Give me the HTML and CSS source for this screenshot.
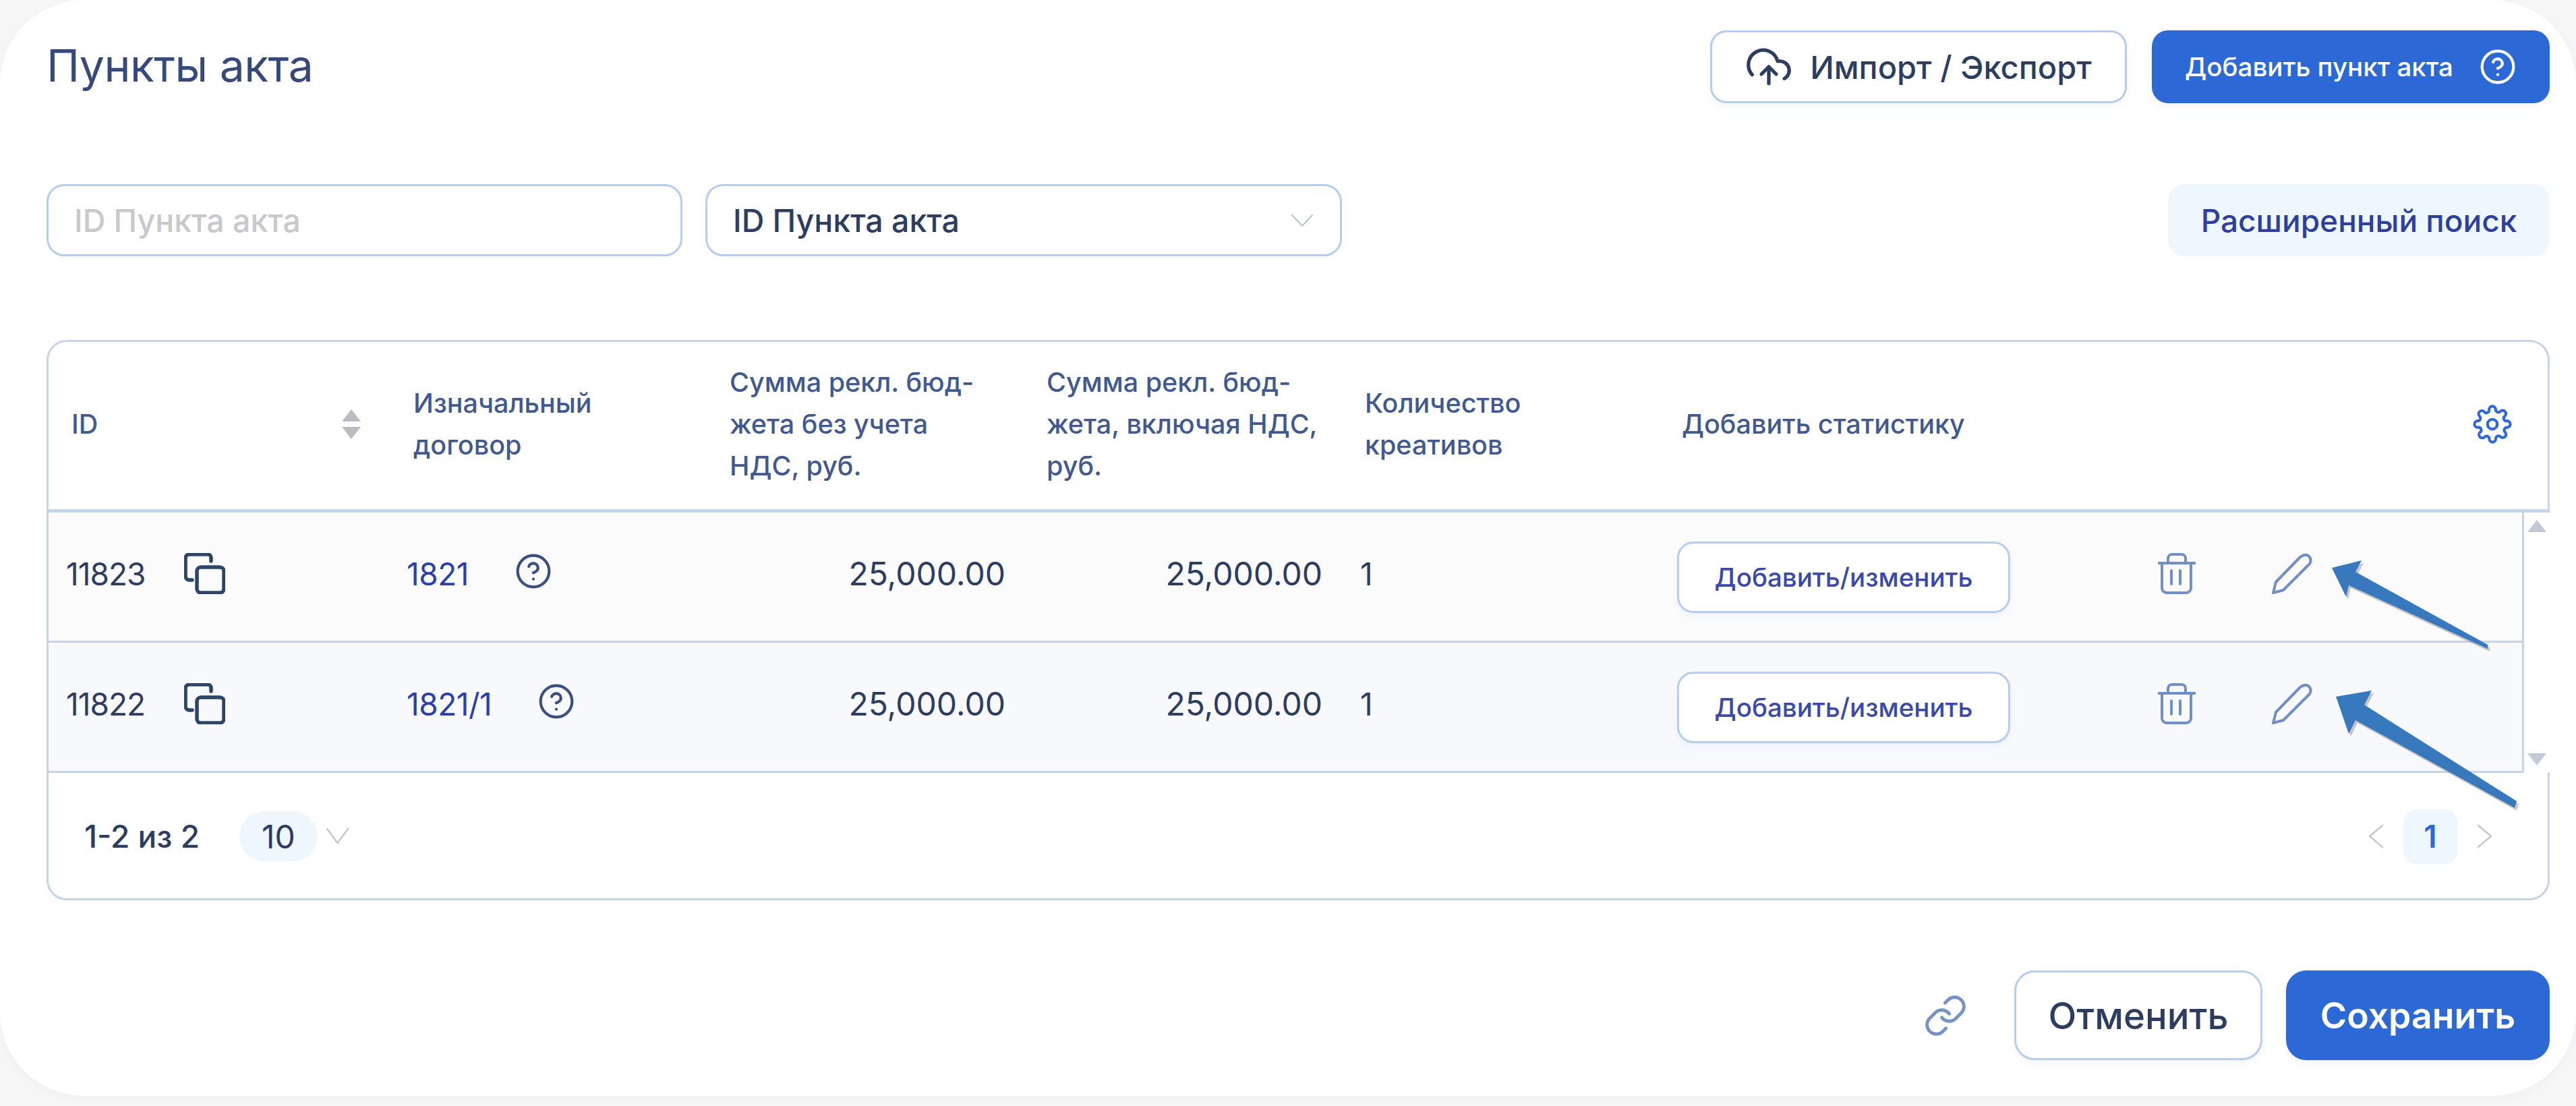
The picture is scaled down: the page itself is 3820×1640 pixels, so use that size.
FILE: index.html
```html
<!DOCTYPE html>
<html lang="ru">
<head>
<meta charset="utf-8">
<title>Пункты акта</title>
<link rel="stylesheet" href="styles.css">
</head>
<body>
<main class="panel">
  <header class="top">
    <h1 class="title">Пункты акта</h1>
    <div class="top-actions">
      <button class="btn btn-import">
        <svg class="ic-cloud" viewBox="0 0 24 24"><path d="M16 16l-4-4-4 4"/><path d="M12 12v9"/><path d="M20.39 18.39A5 5 0 0 0 18 9h-1.26A8 8 0 1 0 3 16.3"/></svg>
        <span>Импорт / Экспорт</span>
      </button>
      <button class="btn btn-add">
        <span>Добавить пункт акта</span>
        <svg class="ic-help ic-help-white" viewBox="0 0 24 24"><circle cx="12" cy="12" r="10"/><path d="M9.09 9a3 3 0 0 1 5.83 1c0 2-3 3-3 3"/><path d="M12 17h.01"/></svg>
      </button>
    </div>
  </header>

  <section class="filters">
    <div class="field placeholder">ID Пункта акта</div>
    <div class="field select">
      <span>ID Пункта акта</span>
      <svg class="chev chev-select" viewBox="0 0 32 18"><path d="M1 1l15 16L31 1"/></svg>
    </div>
    <button class="btn btn-adv">Расширенный поиск</button>
  </section>

  <section class="card">
    <div class="grid head">
      <div class="cell-id"><span>ID</span><span class="sort"><i class="tri tri-up"></i><i class="tri tri-down"></i></span></div>
      <div>Изначальный<br>договор</div>
      <div>Сумма рекл. бюд-<br>жета без учета<br>НДС, руб.</div>
      <div>Сумма рекл. бюд-<br>жета, включая НДС,<br>руб.</div>
      <div>Количество<br>креативов</div>
      <div class="cell-stat">
        <span>Добавить статистику</span>
        <svg class="ic-gear" viewBox="0 0 24 24"><circle cx="12" cy="12" r="3"/><path d="M19.4 15a1.65 1.65 0 0 0 .33 1.82l.06.06a2 2 0 1 1-2.83 2.83l-.06-.06a1.65 1.65 0 0 0-2.82 1.17V21a2 2 0 1 1-4 0v-.09a1.65 1.65 0 0 0-2.82-1.11l-.06.06a2 2 0 1 1-2.83-2.83l.06-.06A1.65 1.65 0 0 0 3.09 14H3a2 2 0 1 1 0-4h.09a1.65 1.65 0 0 0 1.11-2.82l-.06-.06a2 2 0 1 1 2.83-2.83l.06.06A1.65 1.65 0 0 0 10 3.09V3a2 2 0 1 1 4 0v.09a1.65 1.65 0 0 0 2.82 1.11l.06-.06a2 2 0 1 1 2.83 2.83l-.06.06A1.65 1.65 0 0 0 20.91 10H21a2 2 0 1 1 0 4h-.09a1.65 1.65 0 0 0-1.51 1z"/></svg>
      </div>
    </div>

    <div class="scroll">
      <div class="rows">
        <div class="grid row row-a">
          <div class="cell-num"><span class="num">11823</span>
            <svg class="ic-copy" viewBox="0 0 61 61"><path d="M40 12V7a5 5 0 0 0-5-5H8a6 6 0 0 0-6 6v26a6 6 0 0 0 6 6h4"/><rect x="19" y="21" width="40" height="38" rx="6"/></svg>
          </div>
          <div class="cell-link"><span class="link">1821</span>
            <svg class="ic-help" viewBox="0 0 24 24"><circle cx="12" cy="12" r="10"/><path d="M9.09 9a3 3 0 0 1 5.83 1c0 2-3 3-3 3"/><path d="M12 17h.01"/></svg>
          </div>
          <div class="cell-sum">25,000.00</div>
          <div class="cell-sum cell-sum2">25,000.00</div>
          <div class="cell-count">1</div>
          <div class="cell-actions">
            <button class="btn btn-edit">Добавить/изменить</button>
            <svg class="ic-trash" viewBox="0 0 56 61"><path d="M1 15h54"/><path d="M15 15V8a6 6 0 0 1 6-6h14a6 6 0 0 1 6 6v7"/><path d="M6 15v37a7 7 0 0 0 7 7h29a7 7 0 0 0 7-7V15"/><path d="M20 26v20M33 26v20"/></svg>
            <svg class="ic-pencil" viewBox="0 0 60 61"><path d="M2 59l4-16L42 6q6-5 12-2 6 5 2 12L17 55z"/></svg>
          </div>
        </div>
        <div class="grid row row-b">
          <div class="cell-num"><span class="num">11822</span>
            <svg class="ic-copy" viewBox="0 0 61 61"><path d="M40 12V7a5 5 0 0 0-5-5H8a6 6 0 0 0-6 6v26a6 6 0 0 0 6 6h4"/><rect x="19" y="21" width="40" height="38" rx="6"/></svg>
          </div>
          <div class="cell-link"><span class="link">1821/1</span>
            <svg class="ic-help" viewBox="0 0 24 24"><circle cx="12" cy="12" r="10"/><path d="M9.09 9a3 3 0 0 1 5.83 1c0 2-3 3-3 3"/><path d="M12 17h.01"/></svg>
          </div>
          <div class="cell-sum">25,000.00</div>
          <div class="cell-sum cell-sum2">25,000.00</div>
          <div class="cell-count">1</div>
          <div class="cell-actions">
            <button class="btn btn-edit">Добавить/изменить</button>
            <svg class="ic-trash" viewBox="0 0 56 61"><path d="M1 15h54"/><path d="M15 15V8a6 6 0 0 1 6-6h14a6 6 0 0 1 6 6v7"/><path d="M6 15v37a7 7 0 0 0 7 7h29a7 7 0 0 0 7-7V15"/><path d="M20 26v20M33 26v20"/></svg>
            <svg class="ic-pencil" viewBox="0 0 60 61"><path d="M2 59l4-16L42 6q6-5 12-2 6 5 2 12L17 55z"/></svg>
          </div>
        </div>
      </div>
      <div class="scrollbar"><i class="tri tri-up tri-bar"></i><i class="tri tri-down tri-bar"></i></div>
    </div>

    <footer class="pager">
      <div class="pager-left">
        <span class="range">1-2 из 2</span>
        <span class="size">10</span>
        <svg class="chev chev-size" viewBox="0 0 33 24"><path d="M1 1l15.500 21L32 1"/></svg>
      </div>
      <div class="pager-right">
        <svg class="chev chev-side" viewBox="0 0 22 34"><path d="M21 1L2 17l19 16"/></svg>
        <span class="page">1</span>
        <svg class="chev chev-side" viewBox="0 0 22 34"><path d="M1 1l19 16L1 33"/></svg>
      </div>
    </footer>
  </section>

  <footer class="bottom">
    <svg class="ic-link" viewBox="0 0 24 24"><path d="M10 13a5 5 0 0 0 7.54.54l3-3a5 5 0 0 0-7.07-7.07l-1.72 1.71"/><path d="M14 11a5 5 0 0 0-7.54-.54l-3 3a5 5 0 0 0 7.07 7.07l1.71-1.71"/></svg>
    <button class="btn btn-cancel">Отменить</button>
    <button class="btn btn-save">Сохранить</button>
  </footer>

  <svg class="arrows" viewBox="0 0 3820 1640">
    <path class="arrow-shadow" d="M3458 842L3502 831 3493 848 3689 956 3689 962 3483 868 3479 885z"/>
    <path class="arrow-shadow" d="M3464 1033L3517 1024 3506 1045 3732 1188 3729 1198 3493 1068 3483 1088z"/>
    <path class="arrow" d="M3458 842L3502 831 3493 848 3689 956 3689 962 3483 868 3479 885z"/>
    <path class="arrow" d="M3464 1033L3517 1024 3506 1045 3732 1188 3729 1198 3493 1068 3483 1088z"/>
  </svg>
</main>
</body>
</html>
```

FILE: styles.css
```css
* { box-sizing: border-box; }
html, body { margin: 0; width: 3820px; height: 1640px; overflow: hidden; }
body { background: #f6f6f6; font-family: Inter, "Noto Sans", sans-serif; color: #2d3d5f; }
svg { display: block; fill: none; stroke-linecap: round; stroke-linejoin: round; }
i { display: block; }
button { font-family: inherit; }

.panel {
  position: relative;
  height: 1625px;
  padding: 45px 39px 0 69px;
  background: #fff;
  border-radius: 124px;
  box-shadow: 0 4px 16px rgba(0, 0, 0, .03);
}

.top { display: flex; justify-content: space-between; align-items: center; height: 108px; }
.title { margin: -4px 0 0; font-size: 66px; font-weight: 400; color: #36497a; letter-spacing: -.5px; }
.top-actions { display: flex; gap: 37px; }

.btn { display: flex; align-items: center; justify-content: center; border-radius: 24px; background: #fff; color: #2d3d5f; border: 3px solid #b5cdee; padding: 0; box-shadow: 0 6px 8px rgba(120, 150, 200, .08); }
.btn-import { width: 618px; height: 108px; gap: 26px; font-size: 47px; font-weight: 500; }
.ic-cloud { width: 70px; height: 66px; stroke: #2d3d5f; stroke-width: 1.900; }
.btn-add { width: 590px; height: 108px; gap: 38px; border: 0; background: #2d69d6; color: #fff; font-size: 38.500px; font-weight: 500; }
.ic-help { width: 56px; height: 56px; stroke: #3a5082; stroke-width: 1.800; }
.ic-help-white { stroke: #fff; }

.filters { display: flex; gap: 34px; margin-top: 120px; height: 107px; }
.field { display: flex; align-items: center; width: 943px; border: 3px solid #b5cdee; border-radius: 26px; padding: 0 38px; font-size: 46.500px; font-weight: 500; }
.placeholder { color: #c8c9cc; }
.select { width: 944px; justify-content: space-between; padding-right: 40px; }
.chev { stroke: #c4c7cc; stroke-width: 2.500; }
.chev-select { width: 32px; height: 18px; }
.btn-adv { width: 566px; margin-left: auto; border: 0; background: #eef6fe; color: #2f3f9e; font-size: 46px; font-weight: 500; box-shadow: none; }

.card { height: 831px; margin-top: 124px; border: 3px solid #c6d3e9; border-radius: 30px; }
.grid { display: grid; grid-template-columns: 525px 469px 470px 472px 470px 1fr; }
.head { height: 253px; align-items: center; padding-bottom: 4px; font-size: 39.500px; font-weight: 500; line-height: 62px; color: #41598f; border-bottom: 5px solid #c6d3e9; }
.head > div { padding-left: 16px; }
.head > .cell-id { display: flex; justify-content: space-between; align-items: center; padding: 0 62px 0 34px; }
.sort { display: flex; flex-direction: column; gap: 8px; }
.tri { width: 0; height: 0; border-left: 14px solid transparent; border-right: 14px solid transparent; }
.tri-up { border-bottom: 18px solid #b9bcc2; }
.tri-down { border-top: 18px solid #b9bcc2; }
.head > .cell-stat { display: flex; justify-content: space-between; align-items: center; padding-right: 53px; }
.ic-gear { width: 58px; height: 58px; stroke: #2d69d6; stroke-width: 1.700; }

.scroll { display: flex; margin-right: -3px; background: #fff; }
.rows { flex: 1; border-right: 3px solid #c6d3e9; }
.row { height: 193px; align-items: center; padding-bottom: 9px; border-bottom: 3px solid #c6d3e9; font-size: 46px; }
.row-a { background: #fbfbfc; }
.row-b { background: #f8f9fd; }
.scrollbar { display: flex; flex-direction: column; justify-content: space-between; align-items: center; width: 38px; padding: 11px 0 11px; }
.tri-bar { border-left-width: 14px; border-right-width: 14px; }
.tri-bar.tri-up { border-bottom: 18px solid #c2cad8; }
.tri-bar.tri-down { border-top: 18px solid #c2cad8; }

.cell-num { display: flex; align-items: center; gap: 58px; padding-left: 26px; }
.num { letter-spacing: -1px; }
.ic-copy { width: 61px; height: 61px; stroke: #2e4468; stroke-width: 5.500; }
.cell-link { display: flex; align-items: center; gap: 68px; padding-left: 6px; }
.cell-link .ic-help { margin-top: -8px; }
.link { color: #2b3fa8; letter-spacing: -.5px; }
.cell-sum { text-align: right; padding-right: 45px; font-size: 48px; }
.cell-sum2 { padding-right: 47px; }
.cell-count { padding-left: 9px; }
.cell-actions { display: flex; align-items: center; padding-left: 9px; }
.btn-edit { width: 494px; height: 106px; margin-top: 10px; font-size: 38.500px; font-weight: 500; color: #3b49a8; }
.ic-trash { width: 56px; height: 61px; margin-left: 219px; stroke: #6f8fc6; stroke-width: 4; }
.ic-pencil { width: 60px; height: 61px; margin-left: 113px; stroke: #6f8fc6; stroke-width: 4; }

.pager { display: flex; justify-content: space-between; align-items: center; height: 188px; padding: 0 82px 0 53px; font-size: 46px; font-weight: 500; }
.pager-left, .pager-right { display: flex; align-items: center; }
.size { display: flex; align-items: center; justify-content: center; width: 116px; height: 74px; margin: 0 13px 0 59px; border-radius: 37px; background: #eef6fe; font-size: 48px; font-weight: 400; }
.chev-size { width: 33px; height: 24px; }
.chev-side { width: 22px; height: 34px; }
.page { display: flex; align-items: center; justify-content: center; width: 80px; height: 81px; margin: 0 30px; border-radius: 20px; background: #eef6fe; color: #2d69d6; font-weight: 600; }

.bottom { display: flex; justify-content: flex-end; align-items: center; gap: 35px; height: 133px; margin-top: 104px; }
.ic-link { width: 66px; height: 66px; margin-right: 34px; stroke: #7793c6; stroke-width: 1.800; }
.btn-cancel { width: 368px; height: 133px; font-size: 54.500px; font-weight: 500; border-radius: 30px; }
.btn-save { width: 391px; height: 133px; border: 0; border-radius: 30px; background: #2d69d6; color: #fff; font-size: 53.500px; font-weight: 600; }

.arrows { position: absolute; left: 0; top: 0; width: 3820px; height: 1640px; pointer-events: none; }
.arrow { fill: #3878bd; }
.arrow-shadow { fill: #9a9a9a; opacity: .55; transform: translate(3px, 4px); }
```
